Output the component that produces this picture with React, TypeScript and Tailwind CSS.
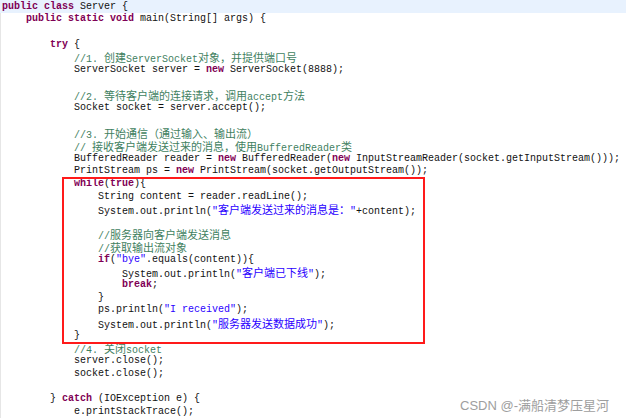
import React from "react";

type Tok = [string, string];
type Line = { i: number; t: Tok[] };

const L = (i: number, ...t: Tok[]): Line => ({ i, t });
const k = (s: string): Tok => ["k", s];
const n = (s: string): Tok => ["n", s];
const c = (s: string): Tok => ["c", s];
const s = (x: string): Tok => ["s", x];

const lines: Line[] = [
  L(1, k("public"), n(" "), k("static"), n(" "), k("void"), n(" main(String[] args) {")),
  L(0),
  L(2, k("try"), n(" {")),
  L(3, c("//1. 创建ServerSocket对象，并提供端口号")),
  L(3, n("ServerSocket server = "), k("new"), n(" ServerSocket(8888);")),
  L(0),
  L(3, c("//2. 等待客户端的连接请求，调用accept方法")),
  L(3, n("Socket socket = server.accept();")),
  L(0),
  L(3, c("//3. 开始通信（通过输入、输出流）")),
  L(3, c("// 接收客户端发送过来的消息，使用BufferedReader类")),
  L(3, n("BufferedReader reader = "), k("new"), n(" BufferedReader("), k("new"), n(" InputStreamReader(socket.getInputStream()));")),
  L(3, n("PrintStream ps = "), k("new"), n(" PrintStream(socket.getOutputStream());")),
];

const boxed: Line[] = [
  L(3, k("while"), n("("), k("true"), n("){")),
  L(4, n("String content = reader.readLine();")),
  L(4, n("System.out.println("), s("\"客户端发送过来的消息是：\""), n("+content);")),
  L(0),
  L(4, c("//服务器向客户端发送消息")),
  L(4, c("//获取输出流对象")),
  L(4, k("if"), n("("), s("\"bye\""), n(".equals(content)){")),
  L(5, n("System.out.println("), s("\"客户端已下线\""), n(");")),
  L(5, k("break"), n(";")),
  L(4, n("}")),
  L(4, n("ps.println("), s("\"I received\""), n(");")),
  L(4, n("System.out.println("), s("\"服务器发送数据成功\""), n(");")),
  L(3, n("}")),
];

const after: Line[] = [
  L(3, c("//4. 关闭socket")),
  L(3, n("server.close();")),
  L(3, n("socket.close();")),
  L(0),
  L(2, n("} "), k("catch"), n(" (IOException e) {")),
  L(3, n("e.printStackTrace();")),
];

const colorCls: Record<string, string> = {
  k: "text-[#7f0055] font-bold",
  n: "text-[#111111]",
  c: "text-[#3f7f5f]",
  s: "text-[#2a00ff]",
};

const indentCls = ["pl-[1px]", "pl-[25px]", "pl-[49px]", "pl-[73px]", "pl-[97px]", "pl-[121px]"];

function Run({ text }: { text: string }) {
  const parts = text.split(/([\u3000-\u303f\u4e00-\u9fff\uff00-\uffef]+)/);
  return (
    <>
      {parts.map((p, idx) =>
        p === "" ? null : idx % 2 === 1 ? (
          <span key={idx} className="font-['Noto_Sans_CJK_SC',sans-serif] text-[11px] leading-[12.66px] font-normal">
            {p}
          </span>
        ) : (
          <span key={idx}>{p}</span>
        )
      )}
    </>
  );
}

function CodeLine({ line }: { line: Line }) {
  return (
    <div className={`h-[12.66px] leading-[12.66px] whitespace-pre ${indentCls[line.i]}`}>
      {line.t.map((tok, idx) => (
        <span key={idx} className={colorCls[tok[0]]}>
          <Run text={tok[1]} />
        </span>
      ))}
    </div>
  );
}

export default function App() {
  return (
    <div className="relative w-[626px] h-[419px] overflow-hidden bg-white font-['Liberation_Mono','Noto_Sans_CJK_SC',monospace] text-[10px]">
      <div className="h-[13.33px] leading-[13.33px] bg-[#e8f2fe] pl-[2px] whitespace-pre">
        <span className="text-[#7f0055] font-bold">public</span>
        <span className="text-[#111111]"> </span>
        <span className="text-[#7f0055] font-bold">class</span>
        <span className="text-[#111111]"> Server {"{"}</span>
      </div>
      <div className="border-l border-[#e6e6e6]">
        {lines.map((l, i) => (
          <CodeLine key={i} line={l} />
        ))}
        <div className="relative">
          {boxed.map((l, i) => (
            <CodeLine key={i} line={l} />
          ))}
          <span className="absolute left-[61px] w-[363px] -top-[1px] -bottom-[2px] border-2 border-[#ff1a1a]" />
        </div>
        {after.map((l, i) => (
          <CodeLine key={i} line={l} />
        ))}
      </div>
      <div className="absolute left-[460px] top-[397px] leading-[18px] text-[13px] text-[#9e9e9e] whitespace-nowrap font-['Liberation_Sans','Noto_Sans_CJK_SC',sans-serif]">
        CSDN @-满船清梦压星河
      </div>
    </div>
  );
}
